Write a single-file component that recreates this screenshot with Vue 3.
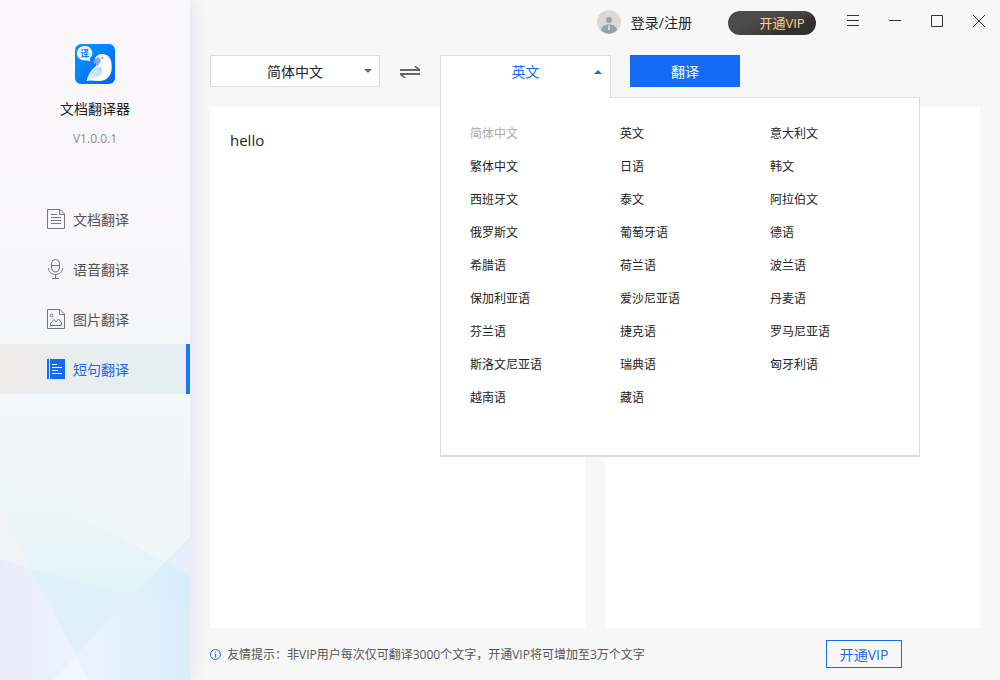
<script setup>
import { ref } from 'vue'

const navItems = [
  { id: 'doc', label: '文档翻译' },
  { id: 'voice', label: '语音翻译' },
  { id: 'image', label: '图片翻译' },
  { id: 'sentence', label: '短句翻译' },
]
const active = ref('sentence')

const languages = [
  '简体中文', '英文', '意大利文',
  '繁体中文', '日语', '韩文',
  '西班牙文', '泰文', '阿拉伯文',
  '俄罗斯文', '葡萄牙语', '德语',
  '希腊语', '荷兰语', '波兰语',
  '保加利亚语', '爱沙尼亚语', '丹麦语',
  '芬兰语', '捷克语', '罗马尼亚语',
  '斯洛文尼亚语', '瑞典语', '匈牙利语',
  '越南语', '藏语',
]
const source = ref('简体中文')
const target = ref('英文')
const open = ref(true)
const text = ref('hello')
const result = ref('')

function choose(lang) {
  target.value = lang
  open.value = false
}

function swap() {
  const previous = source.value
  source.value = target.value
  target.value = previous
}
</script>

<template>
  <div class="window">
    <aside class="sidebar">
      <svg class="facets" viewBox="0 0 190 200" preserveAspectRatio="none" aria-hidden="true">
        <defs>
          <linearGradient id="f-top" x1="0" y1="0" x2="0" y2="1">
            <stop offset="0" stop-color="#f0f6f9" />
            <stop offset="1" stop-color="#eff7f7" />
          </linearGradient>
          <linearGradient id="f-band" x1="0" y1="0" x2="0" y2="1">
            <stop offset="0" stop-color="#eff7f9" />
            <stop offset="0.5" stop-color="#e8f5f8" />
            <stop offset="1" stop-color="#e1f4f9" />
          </linearGradient>
          <linearGradient id="f-right" x1="0" y1="0" x2="1" y2="0">
            <stop offset="0" stop-color="#eaf4fe" />
            <stop offset="1" stop-color="#daedf9" />
          </linearGradient>
          <linearGradient id="f-left" x1="0" y1="0" x2="1" y2="0">
            <stop offset="0" stop-color="#ebebf8" />
            <stop offset="1" stop-color="#eaf4fe" />
          </linearGradient>
          <linearGradient id="f-blue" x1="0" y1="0" x2="1" y2="0">
            <stop offset="0" stop-color="#dff2f9" />
            <stop offset="1" stop-color="#d8ecfb" />
          </linearGradient>
        </defs>
        <path d="M0 0H190V57L165 82L60 25L0 0Z" fill="url(#f-top)" />
        <path d="M0 0L60 25L165 82L133 115L30 88L0 25Z" fill="url(#f-band)" />
        <path d="M0 25L30 88L0 79Z" fill="#f1f3f7" />
        <path d="M190 57V96L165 82Z" fill="#e3effb" />
        <path d="M165 82L190 96V128L133 115Z" fill="url(#f-blue)" />
        <path d="M30 88L133 115L76 176Z" fill="#e1f1fa" />
        <path d="M133 115L190 128V200H88L76 176Z" fill="url(#f-right)" />
        <path d="M0 79L30 88L76 176L53 200H0Z" fill="url(#f-left)" />
        <path d="M76 176L88 200H53Z" fill="#f2f7ff" />
      </svg>

      <div class="brand">
        <svg class="logo" viewBox="0 0 120 120" role="img" aria-label="文档翻译器">
          <defs>
            <linearGradient id="logo-bg" x1="0" y1="0" x2="1" y2="1">
              <stop offset="0" stop-color="#0a9bff" />
              <stop offset="1" stop-color="#0060ff" />
            </linearGradient>
            <linearGradient id="wing" x1="1" y1="0" x2="0" y2="1">
              <stop offset="0" stop-color="#b5d3ff" />
              <stop offset="1" stop-color="#eef5ff" />
            </linearGradient>
          </defs>
          <rect width="120" height="120" rx="18" fill="url(#logo-bg)" />
          <path d="M29 6C43 6 52 16 52 28C52 34 49 40 44 43L46 52L33 49C18 51 6 41 6 28C6 16 16 6 29 6Z" fill="#fff" />
          <text x="29" y="38" text-anchor="middle" font-size="27" font-weight="700" fill="#0b7dff">译</text>
          <path d="M60 43C65 33 76 28 87 31C103 34 110 47 110 66C112 90 99 109 76 111C61 112 50 108 35 111C40 94 48 76 63 67C66 62 64 56 60 43Z" fill="#fff" />
          <path d="M57 60C54 47 63 39 73 41C77 44 79 50 76 55C73 60 70 62 68 67C63 65 65 61 63 59C61 57 59 58 57 60Z" fill="#85a9dc" />
          <path d="M35 111C39 91 57 68 75 68C88 72 83 92 68 99C57 103 46 106 35 111Z" fill="url(#wing)" />
          <circle cx="82" cy="42" r="3" fill="#5b8fdd" />
        </svg>
        <h1>文档翻译器</h1>
        <p>V1.0.0.1</p>
      </div>

      <nav>
        <button
          v-for="item in navItems"
          :key="item.id"
          type="button"
          class="nav-item"
          :class="{ active: active === item.id }"
          @click="active = item.id"
        >
          <svg v-if="item.id === 'doc'" viewBox="0 0 18 20" aria-hidden="true">
            <path d="M.5.5H13L17.5 5V19.5H.5ZM12.5.5V5.5H17.5M4 5.5H10M4 8.5H14M4 11.5H14M4 14.5H14" />
          </svg>
          <svg v-else-if="item.id === 'voice'" viewBox="0 0 18 20" aria-hidden="true">
            <path d="M4.5 4.5A4 4 0 0 1 12.5 4.5V9A4 4 0 0 1 4.5 9ZM4.5 6.5H12.5M1.5 9C1.5 13 4.5 15.5 8.5 15.5S15.5 13 15.5 9M8.5 15.5V19.5M5 19.5H12" />
          </svg>
          <svg v-else-if="item.id === 'image'" viewBox="0 0 18 20" aria-hidden="true">
            <path d="M.5.5H13L17.5 5V19.5H.5ZM12.5.5V5.5H17.5M3.5 16.5V14.5L7 10.5L9 13L11.5 10L14.5 13.5V16.5Z" />
            <circle cx="4.5" cy="6.5" r="1.3" />
          </svg>
          <svg v-else viewBox="0 0 18 20" aria-hidden="true">
            <path class="solid" d="M0 0H2V20H0ZM3 0H18V20H3Z" />
            <path class="lines" d="M5 5.5H10M5 8.5H15M5 11.5H11M5 14.5H15" />
          </svg>
          <span>{{ item.label }}</span>
        </button>
      </nav>
    </aside>

    <main class="main">
      <header class="titlebar">
        <button type="button" class="login">
          <svg viewBox="0 0 24 24" aria-hidden="true">
            <circle cx="12" cy="12" r="12" fill="#d9d9d9" />
            <circle cx="12" cy="10" r="3" fill="#94a3ab" />
            <path d="M4 20C5 16 8 14.500 12 14.500S19 16 20 20C16 25 8 25 4 20Z" fill="#94a3ab" />
            <path d="M11.500 15H12.500L13 20H11Z" fill="#e4e6e7" />
          </svg>
          <span>登录/注册</span>
        </button>
        <button type="button" class="vip-pill">开通VIP</button>
        <div class="controls">
          <button type="button" aria-label="菜单">
            <svg viewBox="0 0 12 12"><path d="M0 .5H12M0 5.500H12M0 10.500H12" /></svg>
          </button>
          <button type="button" aria-label="最小化">
            <svg viewBox="0 0 12 12"><path d="M0 5.500H12" /></svg>
          </button>
          <button type="button" aria-label="最大化">
            <svg viewBox="0 0 12 12"><path d="M.5.5H11.500V11.500H.5Z" /></svg>
          </button>
          <button type="button" aria-label="关闭">
            <svg viewBox="0 0 12 12"><path d="M0 0L12 12M12 0L0 12" /></svg>
          </button>
        </div>
      </header>

      <section class="toolbar">
        <div class="source">
          <select v-model="source" aria-label="源语言">
            <option v-for="lang in languages" :key="lang">{{ lang }}</option>
          </select>
          <svg class="caret" viewBox="0 0 8 4" aria-hidden="true"><path d="M0 0H8L4 4Z" /></svg>
        </div>
        <button type="button" class="swap" aria-label="交换语言" @click="swap">
          <svg viewBox="0 0 20 16" aria-hidden="true">
            <path d="M0 6H17L14 3H16L20 6V8H0ZM20 12H3L6 15H4L0 12V10H20Z" />
          </svg>
        </button>
        <div class="target">
          <button
            type="button"
            class="tab"
            aria-haspopup="listbox"
            :aria-expanded="open"
            @click="open = !open"
          >
            {{ target }}
            <svg class="caret" viewBox="0 0 8 4" aria-hidden="true"><path d="M0 4H8L4 0Z" /></svg>
          </button>
          <div v-if="open" class="popup" role="listbox" aria-label="目标语言">
            <button
              v-for="lang in languages"
              :key="lang"
              type="button"
              role="option"
              :aria-selected="lang === target"
              :disabled="lang === source"
              @click="choose(lang)"
            >{{ lang }}</button>
          </div>
        </div>
        <button type="button" class="translate">翻译</button>
      </section>

      <section class="panes">
        <textarea v-model="text" aria-label="原文" spellcheck="false"></textarea>
        <textarea v-model="result" aria-label="译文" readonly></textarea>
      </section>

      <footer class="footer">
        <svg viewBox="0 0 11 11" aria-hidden="true">
          <circle cx="5.500" cy="5.500" r="5" />
          <path d="M5.500 5V8.500M5.500 2.500V3.500" />
        </svg>
        <p>友情提示：非VIP用户每次仅可翻译3000个文字，开通VIP将可增加至3万个文字</p>
        <button type="button">开通VIP</button>
      </footer>
    </main>
  </div>
</template>

<style>
body {
  margin: 0;
  background: #f7f7f7;
}
</style>

<style scoped>
.window {
  display: flex;
  min-height: 100vh;
  background: #f7f7f7;
  color: #222;
  font-family: "Open Sans", "Noto Sans CJK SC", sans-serif;
  font-size: 14px;
}

button,
select,
textarea {
  margin: 0;
  padding: 0;
  border: 0;
  border-radius: 0;
  background: none;
  color: inherit;
  font: inherit;
  outline: none;
}

button {
  cursor: pointer;
}

svg {
  display: block;
  flex: none;
}

.sidebar {
  position: relative;
  flex: none;
  width: 190px;
  background: linear-gradient(#f9f7fa 0, #f9f7fa 180px, #f5f6f8 350px, #f1f7fa 400px, #f0f6f9 500px);
  box-shadow: 0 0 16px #dcdfea;
}

.facets {
  position: absolute;
  bottom: 0;
  left: 0;
  width: 100%;
  height: 200px;
}

.brand {
  display: flex;
  flex-direction: column;
  align-items: center;
  height: 150px;
  padding-top: 44px;
}

.logo {
  width: 40px;
  height: 40px;
}

.brand h1 {
  margin: 15px 0 0;
  font-size: 14px;
  font-weight: 400;
  line-height: 20px;
}

.brand p {
  margin: 10px 0 0;
  color: #858d99;
  font-size: 12px;
  line-height: 20px;
}

nav {
  position: relative;
}

.nav-item {
  display: flex;
  align-items: center;
  gap: 8px;
  box-sizing: border-box;
  width: 100%;
  height: 50px;
  padding-left: 47px;
  border-right: 4px solid transparent;
  color: #555;
}

.nav-item svg {
  width: 18px;
  height: 20px;
  fill: none;
  stroke: #777;
}

.nav-item.active {
  border-right-color: #1677ff;
  background: linear-gradient(90deg, #efebeb, #e8edee 50%, #e4eff1);
  color: #166bf4;
}

.nav-item .solid {
  fill: #166bf4;
  stroke: none;
}

.nav-item .lines {
  stroke: #fff;
}

.main {
  display: flex;
  flex: 1;
  flex-direction: column;
  min-width: 0;
}

.titlebar {
  display: flex;
  align-items: center;
  justify-content: flex-end;
  height: 45px;
}

.login {
  display: flex;
  align-items: center;
  gap: 10px;
  height: 44px;
  margin-right: 36px;
  align-self: flex-start;
}

.login svg {
  width: 24px;
  height: 24px;
}

.vip-pill {
  box-sizing: border-box;
  width: 88px;
  height: 24px;
  margin-right: 16px;
  padding-left: 20px;
  border-radius: 12px;
  background: linear-gradient(160deg, #4b4b4b 35%, #46403a 55%, #303030 75%);
  color: #ffcf8b;
  font-size: 13px;
  line-height: 24px;
}

.controls {
  display: flex;
  align-self: flex-start;
}

.controls button {
  display: grid;
  place-items: center;
  width: 42px;
  height: 42px;
}

.controls svg {
  width: 12px;
  height: 12px;
  fill: none;
  stroke: #333;
}

.toolbar {
  display: flex;
  gap: 20px;
  height: 32px;
  padding: 10px 20px 20px;
}

.source,
.target {
  position: relative;
  width: 170px;
}

.source select {
  box-sizing: border-box;
  width: 100%;
  height: 32px;
  border: 1px solid #dcdcdc;
  background: #fff;
  appearance: none;
  text-align: center;
  text-align-last: center;
}

.caret {
  position: absolute;
  top: 14px;
  right: 8px;
  width: 8px;
  height: 4px;
  fill: #666;
  pointer-events: none;
}

.swap svg {
  width: 20px;
  height: 16px;
  fill: #666;
}

.target {
  z-index: 1;
}

.tab {
  position: relative;
  z-index: 1;
  box-sizing: border-box;
  width: 171px;
  height: 43px;
  padding-bottom: 12px;
  border: 1px solid #dcdcdc;
  border-bottom: 0;
  background: #fff;
  color: #166bf4;
}

.tab .caret {
  fill: #166bf4;
}

.popup {
  position: absolute;
  top: 42px;
  left: 0;
  display: grid;
  grid-template-columns: repeat(3, 150px);
  grid-auto-rows: 33px;
  box-sizing: border-box;
  width: 480px;
  padding: 18px 0 42px 29px;
  border: 1px solid #dcdcdc;
  border-bottom-width: 2px;
  background: #fff;
}

.popup button {
  font-size: 12px;
  text-align: left;
}

.popup button:disabled {
  color: #aaa;
}

.translate {
  width: 110px;
  background: #166bf4;
  color: #fff;
}

.panes {
  display: grid;
  flex: 1;
  grid-template-columns: 1fr 1fr;
  gap: 20px;
  padding: 0 20px;
}

.panes textarea {
  display: block;
  box-sizing: border-box;
  width: 100%;
  height: 100%;
  padding: 21px 20px;
  background: #fff;
  font-size: 15px;
  line-height: 24px;
  resize: none;
}

.footer {
  display: flex;
  align-items: center;
  gap: 6px;
  height: 52px;
  padding: 0 98px 0 20px;
}

.footer svg {
  width: 11px;
  height: 11px;
  fill: none;
  stroke: #166bf4;
}

.footer p {
  flex: 1;
  margin: 0;
  color: #555;
  font-size: 12px;
}

.footer button {
  box-sizing: border-box;
  width: 76px;
  height: 28px;
  border: 1px solid #166bf4;
  color: #166bf4;
}
</style>
